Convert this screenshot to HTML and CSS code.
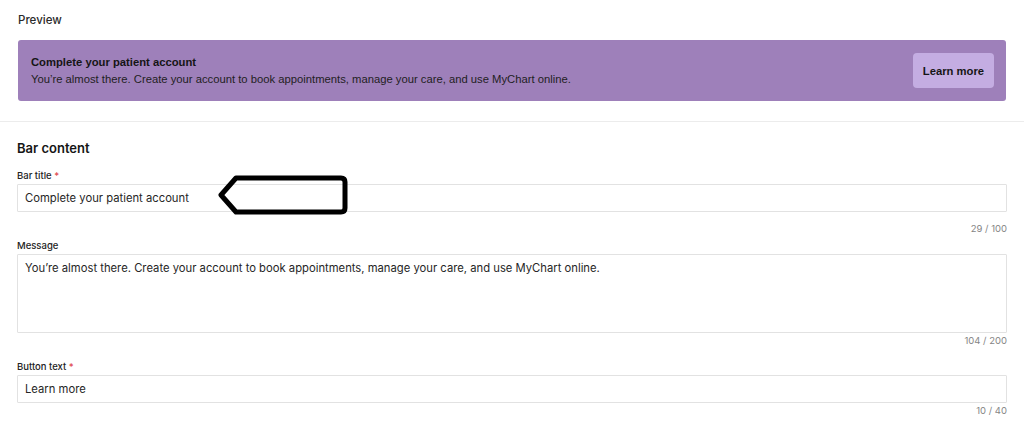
FILE: index.html
```html
<!DOCTYPE html>
<html lang="en">
<head>
    <meta charset="UTF-8">
    <title>Bar content</title>
    <link rel="stylesheet" href="styles.css">
</head>
<body>
    <section class="preview">
        <h2 class="preview-title">Preview</h2>
        <div class="barra">
            <div class="barra-texto">
                <p class="barra-titulo">Complete your patient account</p>
                <p class="barra-mensaje">You’re almost there. Create your account to book appointments, manage your care, and use MyChart online.</p>
            </div>
            <button class="barra-boton">Learn more</button>
        </div>
    </section>

    <section class="contenido">
        <h3 class="contenido-titulo">Bar content</h3>

        <div class="campo campo-primero">
            <label class="etiqueta">Bar title <span class="req">*</span></label>
            <div class="caja">Complete your patient account</div>
            <div class="contador">29 / 100</div>
        </div>

        <div class="campo">
            <label class="etiqueta">Message</label>
            <div class="caja caja-area">You’re almost there. Create your account to book appointments, manage your care, and use MyChart online.</div>
            <div class="contador">104 / 200</div>
        </div>

        <div class="campo">
            <label class="etiqueta">Button text <span class="req">*</span></label>
            <div class="caja">Learn more</div>
            <div class="contador">10 / 40</div>
        </div>
    </section>

    <svg class="flecha" width="138" height="46" viewBox="0 0 138 46">
        <path d="M7 23 L22 6 H127 Q131 6 131 10 V36 Q131 40 127 40 H22 Z" fill="none" stroke="#000" stroke-width="5" stroke-linejoin="round"/>
    </svg>
</body>
</html>
```

FILE: styles.css
```css
body {
    margin: 0;
    background: #fff;
    font-family: Inter, "Liberation Sans", sans-serif;
    color: #1c1c1c;
    position: relative;
}
p, h2, h3 {
    margin: 0;
}
.preview {
    padding: 13px 18px 20px;
    border-bottom: 1px solid #ececec;
}
.preview-title {
    font-size: 11.5px;
    line-height: 15px;
    font-weight: 500;
    color: #2a2a2a;
    margin-bottom: 12px;
}
.barra {
    display: flex;
    align-items: center;
    justify-content: space-between;
    height: 61px;
    box-sizing: border-box;
    padding: 0 12px 0 13px;
    background: #9e80ba;
    border-radius: 3px;
    font-family: "Liberation Sans", Arial, sans-serif;
}
.barra-titulo {
    font-size: 11.25px;
    line-height: 17px;
    font-weight: bold;
    color: #151515;
}
.barra-mensaje {
    font-size: 11.25px;
    line-height: 17px;
    color: #1e1e1e;
}
.barra-boton {
    width: 81px;
    height: 35px;
    border: none;
    border-radius: 4px;
    background: #c4ade2;
    color: #151515;
    font-family: "Liberation Sans", Arial, sans-serif;
    font-size: 11.25px;
    font-weight: bold;
    padding: 0;
}
.contenido {
    padding: 18px 17px 0;
}
.contenido-titulo {
    font-size: 13px;
    line-height: 17px;
    font-weight: 600;
    color: #151515;
    margin-bottom: 12px;
}
.campo {
    margin-bottom: 13px;
}
.campo-primero {
    margin-bottom: 4px;
}
.etiqueta {
    display: block;
    font-size: 9.5px;
    line-height: 12px;
    font-weight: 500;
    color: #222;
    padding-top: 1px;
    margin-bottom: 2px;
}
.req {
    color: #e0474c;
}
.caja {
    box-sizing: border-box;
    height: 28px;
    border: 1px solid #e2e2e2;
    border-radius: 1px;
    padding: 0 7px;
    font-size: 11.25px;
    line-height: 26px;
    color: #262626;
}
.caja-area {
    height: 79px;
    padding-top: 1px;
    line-height: 24px;
}
.contador {
    margin-top: 2px;
    text-align: right;
    font-size: 9.5px;
    line-height: 12px;
    color: #858585;
}
.campo-primero .contador {
    margin-top: 11px;
}
.flecha {
    position: absolute;
    left: 214px;
    top: 172px;
}
```
